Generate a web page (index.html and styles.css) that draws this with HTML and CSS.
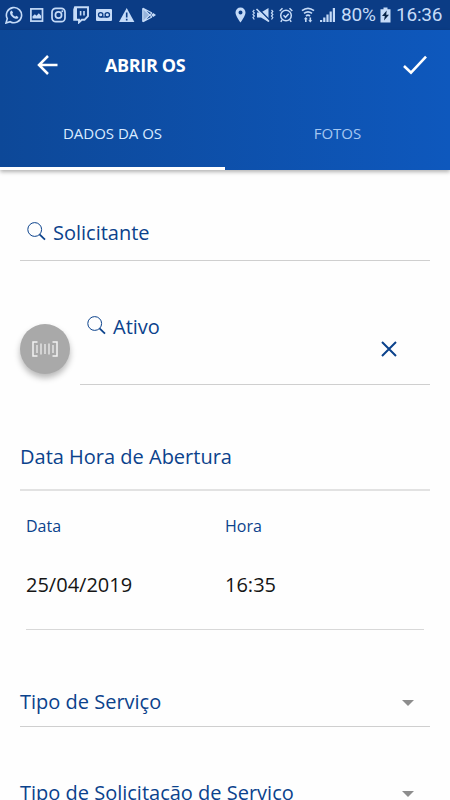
FILE: index.html
```
<!DOCTYPE html>
<html lang="pt-BR">
<head>
  <meta charset="UTF-8">
  <meta name="viewport" content="width=device-width, initial-scale=1">
  <title>Abrir OS</title>
  <link rel="stylesheet" href="styles.css">
</head>
<body>

  <!-- Barra de status -->
  <div class="status-bar">
    <div class="status-group">
      <svg width="18" height="18" viewBox="0 0 18 18"><path d="M1 17l1.300-4.300A7.600 7.600 0 1 1 5.200 15.700z" fill="none" stroke="currentColor" stroke-width="1.600"/><path d="M5.600 5.200l1.200-.8 1.300 2.400-.8 1c.6 1.400 1.500 2.200 2.900 2.900l1-1 2.200 1.200c0 1.500-1.300 2.200-2.700 1.900C7.700 12.200 5.400 9.500 5 7c0-.7.2-1.300.6-1.800z" fill="currentColor"/></svg>
      <svg width="14" height="16" viewBox="0 0 14 16"><rect x=".9" y="1.900" width="11.600" height="12.200" fill="none" stroke="currentColor" stroke-width="1.700"/><path d="M2.500 11.500V9.300l2.400-2 1.600 1.500 2.300-2.500 2.300 2.500v2.700z" fill="currentColor"/></svg>
      <svg width="15" height="16" viewBox="0 0 15 16"><g fill="none" stroke="currentColor" stroke-width="1.700"><rect x="1" y="1.300" width="13" height="13.400" rx="3.800"/><circle cx="7.500" cy="8" r="3.100"/></g><circle cx="11.300" cy="4.300" r="1" fill="currentColor"/></svg>
      <svg width="16" height="18" viewBox="0 0 16 18"><path d="M2 1.200h13v9l-3.500 3.600H8.800L6 16.400v-2.600H1.200V3.600z" fill="none" stroke="currentColor" stroke-width="1.900"/><path d="M2 2v11.500h2V2z" fill="currentColor"/><path d="M7.600 5v4.500M11 5v4.500" stroke="currentColor" stroke-width="1.600"/></svg>
      <svg width="16" height="14" viewBox="0 0 16 14"><rect y="1" width="16" height="12" rx="1" fill="currentColor"/><g fill="none" stroke="#0b3c85" stroke-width="1.300"><circle cx="4.700" cy="6.800" r="2.200"/><circle cx="11.300" cy="6.800" r="2.200"/><path d="M4.700 9h6.600"/></g></svg>
      <svg width="16" height="16" viewBox="0 0 16 16"><path d="M7.700 1L15.400 15H0z" fill="currentColor"/><path d="M7.700 5.500v5M7.700 11.700v1.800" stroke="#0b3c85" stroke-width="1.600"/></svg>
      <svg width="15" height="16" viewBox="0 0 15 16"><path d="M.6.800l7 7.200-7 7.200z" fill="currentColor" fill-opacity=".75"/><path d="M.8 1.300v13.400M1 1.300L9.800 10M1 14.700L9.800 6M1 1.300l9 4.700M1 14.700L10 10" fill="none" stroke="currentColor" stroke-width="1.200"/><path d="M9.200 8l2-2L14 8l-2.800 2z" fill="currentColor"/></svg>
    </div>

    <div class="status-group status-right">
      <svg class="location" width="11" height="16" viewBox="0 0 11 16"><path d="M5.500.5A5 5 0 0 0 .5 5.600C.5 9.300 5.500 15.500 5.500 15.500s5-6.200 5-9.900A5 5 0 0 0 5.500.5zm0 3a2 2 0 1 1 0 4 2 2 0 0 1 0-4z" fill="currentColor" fill-rule="evenodd"/></svg>
      <svg width="22" height="16" viewBox="0 0 22 16"><path d="M5 5.500h4L16.500 1v14L9 10.500H5z" fill="currentColor"/><path d="M6 1.500l13 13" stroke="#0b3c85" stroke-width="1.600"/><path d="M4.500 2l12.500 12.500" stroke="currentColor" stroke-width="1.600"/><path d="M2.300 3L1 4.500 2.300 6 1 7.500 2.300 9 1 10.500 2.300 12.500M19.500 3l1.300 1.500L19.500 6l1.300 1.500L19.500 9l1.300 1.500-1.300 2" fill="none" stroke="currentColor" stroke-width="1.200"/></svg>
      <svg width="14" height="16" viewBox="0 0 14 16"><g fill="none" stroke="currentColor" stroke-width="1.500"><circle cx="7" cy="8.500" r="5.300"/><path d="M4.500 8.300l2 2 3.200-3.600M.7 4l2.800-2.700M13.300 4l-2.800-2.700M3 13l-1.200 1.800M11 13l1.200 1.800"/></g></svg>
      <svg class="wifi" width="14" height="16" viewBox="0 0 14 16"><g fill="none" stroke="currentColor" stroke-width="1.700"><path d="M1 3.700q6-4.600 12 0M3 6.400q4-3.200 8 0M5 9q2-1.600 4 0"/></g><path d="M4.800 10l2 2.300h-1.200V15H4v-2.700H2.800zM9.300 15.500l-2-2.300h1.200v-2.700h1.600v2.700h1.200z" fill="currentColor"/></svg>
      <svg width="15" height="16" viewBox="0 0 15 16"><path d="M0 13h2.200v2H0zM3.200 10.500h2.200V15H3.200zM6.400 7.500h2.200V15H6.400zM9.600 4.500h2.200V15H9.600zM12.800 1H15v14h-2.200z" fill="currentColor"/></svg>
      <span class="status-battery">80%</span>
      <svg width="11" height="16" viewBox="0 0 11 16"><path d="M.5 2.300H3.500V.5h4v1.800h3V15.500H.5z" fill="currentColor"/><path d="M6.700 3.500L2 9h2.800l-.8 4.500L9 7.800H6.200z" fill="#082447"/></svg>
      <span class="status-time">16:36</span>
    </div>
  </div>

  <!-- Cabeçalho e abas -->
  <header class="header">
    <div class="toolbar">
      <svg class="back" width="22" height="22" viewBox="0 0 22 22"><path d="M20.500 11H2M11 2L2 11l9 9" fill="none" stroke="currentColor" stroke-width="2.500"/></svg>
      <h1 class="title">ABRIR OS</h1>
      <svg class="confirm" width="24" height="20" viewBox="0 0 24 20"><path d="M1 11l7 6.700L23 1.700" fill="none" stroke="currentColor" stroke-width="2.600"/></svg>
    </div>
    <nav class="tabs">
      <a class="tab active">DADOS DA OS</a>
      <a class="tab">FOTOS</a>
    </nav>
  </header>

  <!-- Formulário -->
  <main class="form">
    <div class="field requester">
      <svg class="search" width="19" height="19" viewBox="0 0 19 19"><circle cx="7.700" cy="7.500" r="6.900" fill="none" stroke="currentColor"/><path d="M12.500 12.400l5.500 5.300" stroke="currentColor" stroke-width="1.800"/></svg>
      <span>Solicitante</span>
    </div>

    <div class="asset-row">
      <button class="scan">
        <svg width="26" height="16" viewBox="0 0 26 16"><path d="M5.500 1H1v14h4.500M20.500 1H25v14h-4.500" fill="none" stroke="currentColor" stroke-width="1.500"/><path d="M5 4v8M9 2.500v11M13 3v10M17 2.500v11M21 4v8" stroke="currentColor" stroke-width="1.200"/></svg>
      </button>
      <div class="field asset">
        <svg class="search" width="19" height="19" viewBox="0 0 19 19"><circle cx="7.700" cy="7.500" r="6.900" fill="none" stroke="currentColor"/><path d="M12.500 12.400l5.500 5.300" stroke="currentColor" stroke-width="1.800"/></svg>
        <span>Ativo</span>
        <svg class="clear" width="16" height="16" viewBox="0 0 16 16"><path d="M1 1l14 14M15 1L1 15" stroke="currentColor" stroke-width="2"/></svg>
      </div>
    </div>

    <h2 class="section-title">Data Hora de Abertura</h2>

    <div class="opening">
      <div class="opening-item">
        <span class="label">Data</span>
        <span class="value">25/04/2019</span>
      </div>
      <div class="opening-item">
        <span class="label">Hora</span>
        <span class="value">16:35</span>
      </div>
    </div>

    <div class="select">
      <span>Tipo de Serviço</span>
      <i class="caret"></i>
    </div>
    <div class="select">
      <span>Tipo de Solicitação de Serviço</span>
      <i class="caret"></i>
    </div>
  </main>

</body>
</html>
```
FILE: styles.css
```
* {
  box-sizing: border-box;
}

body {
  margin: 0;
  height: 800px;
  overflow: hidden;
  background-color: #fefefe;
  color: #0b428c;
  font-family: "Open Sans", "Noto Sans", sans-serif;
  font-size: 20px;
  line-height: 28px;
}

svg {
  display: block;
  flex-shrink: 0;
}

/* Barra de status */
.status-bar {
  display: flex;
  justify-content: space-between;
  height: 30px;
  padding: 0 8px 0 5px;
  background-color: #0b3c85;
  color: #c5dbf8;
  font-family: Roboto, sans-serif;
}

.status-group {
  display: flex;
  align-items: center;
  gap: 7px;
}

.status-right {
  gap: 5px;
}

.location {
  margin-right: 1px;
}

.wifi {
  margin-left: 3px;
}

.status-battery {
  width: 34px;
  margin-left: 1px;
  font-size: 19px;
  letter-spacing: -0.2px;
  white-space: nowrap;
}

.status-time {
  width: 46px;
  font-size: 19px;
  letter-spacing: -0.2px;
}

/* Cabeçalho */
.header {
  height: 140px;
  background: linear-gradient(to right, #0d4898, #0e58bd);
  box-shadow: 0 2px 4px rgba(0, 0, 0, 0.3);
  color: #fff;
}

.toolbar {
  display: flex;
  align-items: center;
  height: 70px;
  padding: 0 23px 0 37px;
}

.title {
  margin: 0 auto 0 46px;
  font-size: 18px;
  font-weight: 700;
  letter-spacing: -0.35px;
}

.tabs {
  display: flex;
  height: 70px;
}

.tab {
  flex: 1;
  padding-top: 19px;
  border-bottom: 3px solid transparent;
  color: #a5c7f1;
  font-size: 15px;
  text-align: center;
}

.tab.active {
  border-color: #fff;
  color: #d9ebff;
}

/* Formulário */
.form {
  padding: 0 20px;
}

.field {
  display: flex;
  align-items: flex-start;
  padding-left: 7px;
  border-bottom: 1px solid #cfcfcf;
}

.requester {
  height: 91px;
  padding-top: 49px;
}

.search {
  margin: 3px 7px 0 0;
}

.asset-row {
  display: flex;
  gap: 10px;
  margin-top: 52px;
}

.scan {
  display: flex;
  align-items: center;
  justify-content: center;
  width: 50px;
  height: 50px;
  margin-top: 11px;
  padding: 0;
  border: none;
  border-radius: 50%;
  background-color: #a9a9a9;
  box-shadow: 0 4px 6px rgba(0, 0, 0, 0.28);
  color: #f2f2f2;
}

.asset {
  flex: 1;
  height: 72px;
}

.clear {
  margin: 28px 33px 0 auto;
}

.section-title {
  height: 48px;
  margin: 58px 0 0;
  border-bottom: 2px solid #e2e2e2;
  font-size: 20px;
  font-weight: 400;
}

.opening {
  display: grid;
  grid-template-columns: 1fr 1fr;
  height: 139px;
  margin: 0 6px;
  padding-top: 21px;
  border-bottom: 1px solid #d8d8d8;
}

.opening-item {
  display: flex;
  flex-direction: column;
  gap: 31px;
}

.label {
  font-size: 16px;
}

.value {
  color: #151515;
}

.select {
  display: flex;
  justify-content: space-between;
  height: 39px;
  margin-top: 58px;
  padding-right: 16px;
  border-bottom: 1px solid #cfcfcf;
}

.select + .select {
  margin-top: 52px;
}

/* Seta da lista */
.caret {
  margin-top: 12px;
  height: 0;
  border: 6px solid transparent;
  border-top-color: #8d8d8d;
  border-bottom: 0;
}
```
